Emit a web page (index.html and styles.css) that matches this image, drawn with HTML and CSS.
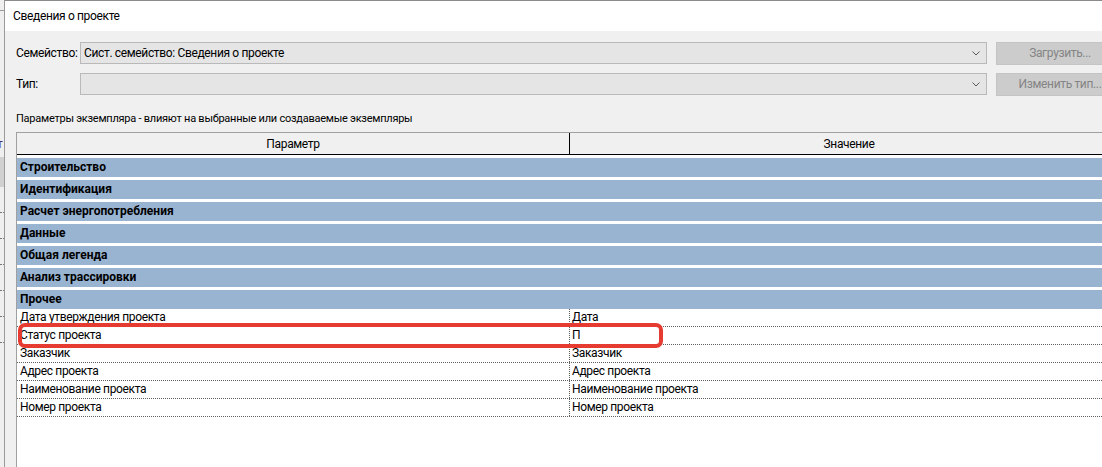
FILE: index.html
```html
<!DOCTYPE html>
<html lang="ru">
<head>
<meta charset="utf-8">
<title>Сведения о проекте</title>
<link rel="stylesheet" href="styles.css">
</head>
<body>
<div class="screen">
  <div class="bg-strip">
    <div class="bg-line"></div>
    <div class="bg-text">т</div>
    <div class="bg-block"></div>
    <div class="bg-dots"></div>
    <div class="bg-dots"></div>
    <div class="bg-dots"></div>
    <div class="bg-dots"></div>
    <div class="bg-dots"></div>
    <div class="bg-dots"></div>
  </div>
  <div class="dialog">
    <div class="titlebar">Сведения о проекте</div>
    <div class="body">
      <div class="field-row">
        <div class="field-label">Семейство:</div>
        <div class="combo">
          <span class="combo-text">Сист. семейство: Сведения о проекте</span>
          <svg class="chevron" width="8" height="5" viewBox="0 0 8 5"><path d="M0.5 0.5 L4 4 L7.5 0.5" fill="none" stroke="#5a5a5a" stroke-width="1"/></svg>
        </div>
        <div class="btn">Загрузить...</div>
      </div>
      <div class="field-row">
        <div class="field-label">Тип:</div>
        <div class="combo">
          <span class="combo-text"></span>
          <svg class="chevron" width="8" height="5" viewBox="0 0 8 5"><path d="M0.5 0.5 L4 4 L7.5 0.5" fill="none" stroke="#5a5a5a" stroke-width="1"/></svg>
        </div>
        <div class="btn">Изменить тип...</div>
      </div>
      <div class="caption">Параметры экземпляра - влияют на выбранные или создаваемые экземпляры</div>
      <div class="grid">
        <div class="grid-head">
          <div class="hcell hcell-param">Параметр</div>
          <div class="hcell hcell-value">Значение</div>
        </div>
        <div class="group">Строительство</div>
        <div class="group">Идентификация</div>
        <div class="group">Расчет энергопотребления</div>
        <div class="group">Данные</div>
        <div class="group">Общая легенда</div>
        <div class="group">Анализ трассировки</div>
        <div class="group">Прочее</div>
        <div class="prop"><div class="pcell">Дата утверждения проекта</div><div class="vcell">Дата</div></div>
        <div class="prop prop-marked"><div class="pcell">Статус проекта</div><div class="vcell">П</div><div class="highlight"></div></div>
        <div class="prop"><div class="pcell">Заказчик</div><div class="vcell">Заказчик</div></div>
        <div class="prop"><div class="pcell">Адрес проекта</div><div class="vcell">Адрес проекта</div></div>
        <div class="prop"><div class="pcell">Наименование проекта</div><div class="vcell">Наименование проекта</div></div>
        <div class="prop"><div class="pcell">Номер проекта</div><div class="vcell">Номер проекта</div></div>
      </div>
    </div>
  </div>
</div>
</body>
</html>
```
FILE: styles.css
```css
* { box-sizing: border-box; }
html, body {
  margin: 0;
  padding: 0;
  width: 1102px;
  height: 467px;
  overflow: hidden;
  background: #f0f0f0;
}
body {
  font-family: Roboto, "Liberation Sans", sans-serif;
  font-size: 12px;
  letter-spacing: -0.35px;
  color: #000;
}
.screen {
  display: flex;
  width: 1102px;
  height: 467px;
  overflow: hidden;
}
.bg-strip {
  width: 4px;
  flex: none;
  background: #efefef;
  display: flex;
  flex-direction: column;
}
.bg-line {
  height: 1px;
  margin-top: 10px;
  background: #9a9a9a;
}
.bg-text {
  margin-top: 126px;
  height: 14px;
  font-size: 12px;
  line-height: 14px;
  color: #4a2a6a;
  overflow: hidden;
  text-indent: -3px;
}
.bg-block {
  height: 30px;
  margin-top: 6px;
  background: #d0d0d0;
}
.bg-dots {
  height: 1px;
  margin-top: 25px;
  border-top: 1px dotted #777;
}
.dialog {
  flex: 1;
  min-width: 0;
  display: flex;
  flex-direction: column;
  border-left: 1px solid #9a9a9a;
  border-top: 1px solid #8a8a8a;
}
.titlebar {
  height: 30px;
  flex: none;
  background: #fff;
  padding-left: 8px;
  line-height: 30px;
  font-size: 12px;
  white-space: nowrap;
}
.body {
  flex: 1;
  background: #f0f0f0;
  padding: 11px 0 0 11px;
  display: flex;
  flex-direction: column;
  overflow: hidden;
}
.field-row {
  display: flex;
  align-items: center;
  height: 22px;
  margin-bottom: 9px;
  white-space: nowrap;
}
.field-label {
  width: 64px;
  flex: none;
}
.combo {
  width: 907px;
  flex: none;
  height: 22px;
  background: #e5e5e5;
  border: 1px solid #b9b9b9;
  display: flex;
  align-items: center;
  justify-content: space-between;
  padding: 0 3px 0 3px;
}
.combo-text {
  white-space: nowrap;
}
.chevron {
  margin-right: 3px;
}
.btn {
  margin-left: 9px;
  width: 128px;
  flex: none;
  height: 23px;
  background: #cccccc;
  border: 1px solid #c4c4c4;
  color: #848484;
  display: flex;
  align-items: center;
  justify-content: center;
}
.caption {
  margin-top: 7px;
  height: 16px;
  line-height: 16px;
  font-size: 11px;
  letter-spacing: -0.25px;
  white-space: nowrap;
}
.grid {
  margin-top: 5px;
  flex: 1;
  width: 1120px;
  background: #fff;
  border-left: 1px solid #a0a0a0;
  border-top: 1px solid #a0a0a0;
}
.grid-head {
  display: flex;
  height: 22px;
  background: #f0f0f0;
  border-bottom: 1px solid #000;
}
.hcell {
  display: flex;
  align-items: center;
  justify-content: center;
}
.hcell-param {
  width: 553px;
  flex: none;
  border-right: 1px solid #000;
}
.hcell-value {
  width: 558px;
  flex: none;
}
.group {
  margin-top: 3px;
  height: 19px;
  line-height: 19px;
  background: #99b4d1;
  font-weight: bold;
  letter-spacing: 0;
  padding-left: 3px;
  white-space: nowrap;
}
.prop {
  display: flex;
  height: 18px;
  border-bottom: 1px dotted #5e5e5e;
  white-space: nowrap;
}
.prop-marked {
  position: relative;
}
.pcell {
  width: 553px;
  flex: none;
  padding-left: 3px;
  line-height: 17px;
  border-right: 1px dotted #5e5e5e;
}
.vcell {
  flex: 1;
  padding-left: 2px;
  line-height: 17px;
}
.highlight {
  position: absolute;
  left: 1px;
  top: -4px;
  width: 645px;
  height: 25px;
  border: 4px solid #e53b30;
  border-radius: 7px;
}
```
